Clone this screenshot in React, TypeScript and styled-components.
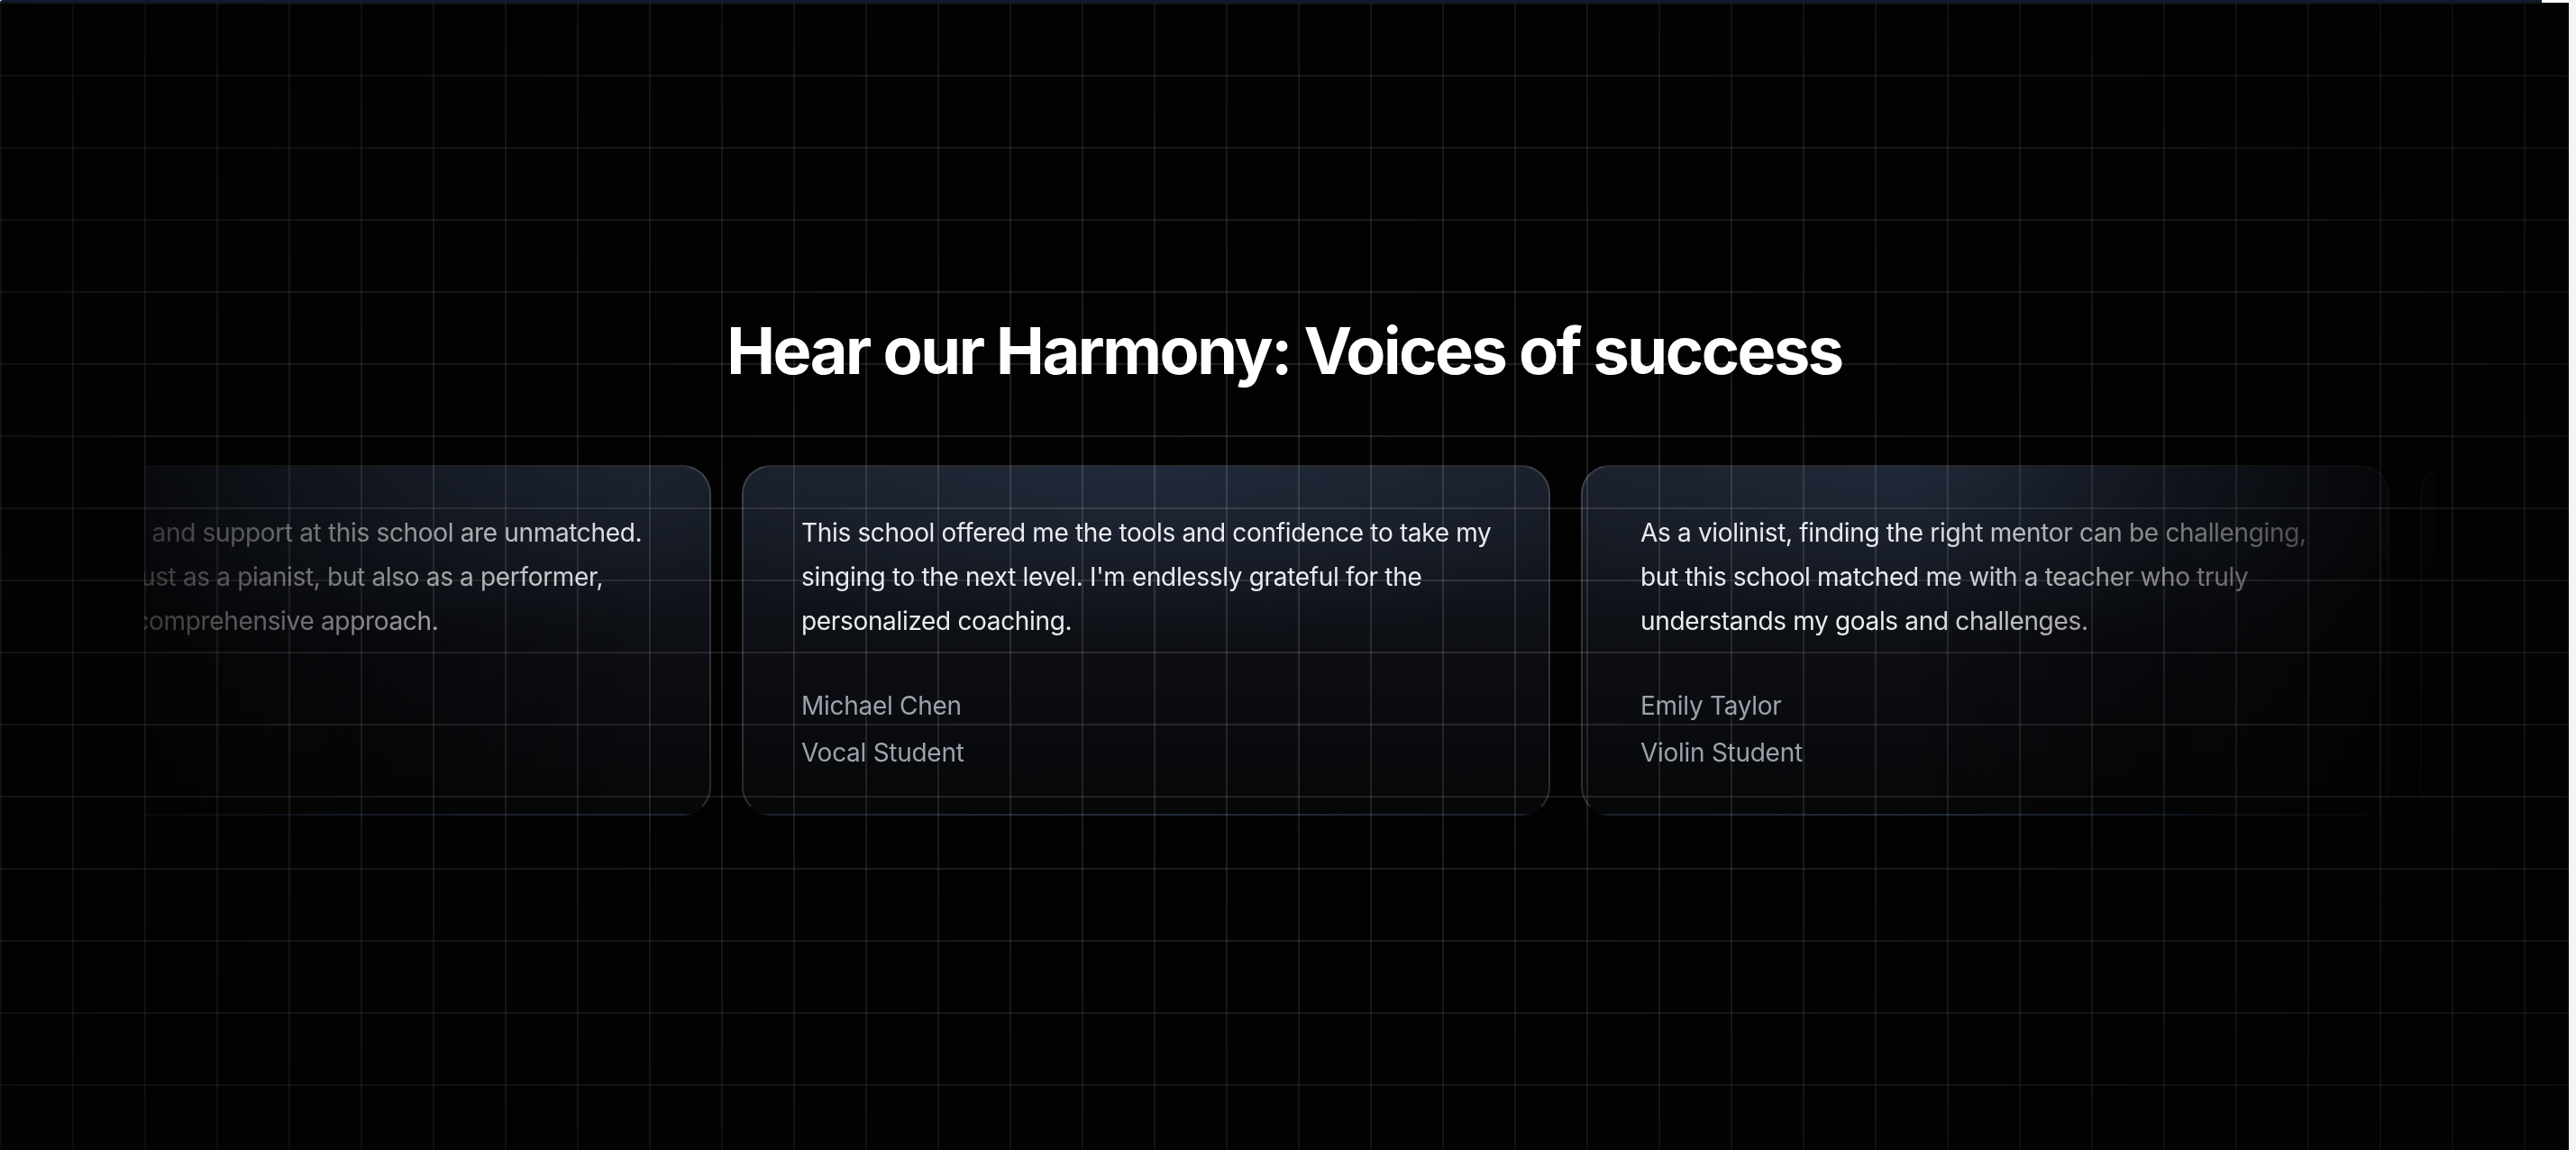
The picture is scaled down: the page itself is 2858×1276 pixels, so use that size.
import React from "react";
import styled, { createGlobalStyle } from "styled-components";

const GlobalStyle = createGlobalStyle`
  * { box-sizing: border-box; }
  html, body { margin: 0; padding: 0; background: #f6f6f6; }
  body {
    font-family: Inter, "Noto Sans", "Liberation Sans", sans-serif;
    -webkit-font-smoothing: antialiased;
  }
`;

const Page = styled.div`
  display: flex;
  height: 100vh;
  overflow: hidden;
`;

const Main = styled.main`
  flex: 1;
  display: flex;
  flex-direction: column;
  background: #020202;
  min-width: 0;
`;

const ScrollStrip = styled.div`
  width: 8px;
  background: #f4f4f4;
  border-left: 1px solid #ececec;
`;

const TopBar = styled.div`
  height: 3px;
  display: flex;
  background: #ffffff;
`;

const TopBarFill = styled.div`
  flex: 1;
  background: #141a2d;
  border-top-left-radius: 3px;
`;

const TopBarCap = styled.div`
  width: 30px;
  background: #ffffff;
`;

const Section = styled.section`
  position: relative;
  flex: 1;
  display: flex;
  flex-direction: column;
  align-items: center;
  padding-top: 350px;
  overflow: hidden;
`;

const GridOverlay = styled.div`
  position: absolute;
  inset: 0;
  pointer-events: none;
  z-index: 3;
  background-image:
    linear-gradient(to right, rgba(255, 255, 255, 0.12) 2px, transparent 2px),
    linear-gradient(to bottom, rgba(255, 255, 255, 0.12) 2px, transparent 2px);
  background-size: 80px 80px;
  background-position: 0 0;
  -webkit-mask-image: radial-gradient(ellipse 70% 75% at 50% 50%, #000 15%, rgba(0, 0, 0, 0.34) 100%);
  mask-image: radial-gradient(ellipse 70% 75% at 50% 50%, #000 15%, rgba(0, 0, 0, 0.34) 100%);
`;

const Title = styled.h2`
  position: relative;
  z-index: 1;
  margin: 0;
  font-size: 72px;
  line-height: 72px;
  font-weight: 700;
  letter-spacing: -0.034em;
  color: #ffffff;
`;

const CarouselMask = styled.div`
  position: relative;
  z-index: 1;
  align-self: stretch;
  margin-top: 91px;
  -webkit-mask-image: linear-gradient(to right, transparent 0%, #000 25%, #000 74%, transparent 97%);
  mask-image: linear-gradient(to right, transparent 0%, #000 25%, #000 74%, transparent 97%);
`;

const Viewport = styled.div`
  margin: 0 148px 0 160px;
  overflow: hidden;
`;

const Track = styled.div`
  display: flex;
  gap: 34px;
  margin-left: -268px;
`;

const Card = styled.article`
  flex: 0 0 897px;
  border: 2px solid rgba(255, 255, 255, 0.15);
  border-bottom-color: transparent;
  border-radius: 32px;
  padding: 49px 48px 42px 64px;
  background:
    radial-gradient(110% 70% at 50% 0%, rgba(46, 60, 84, 0.45) 0%, rgba(46, 60, 84, 0) 70%),
    linear-gradient(180deg, #171c26 0%, #0c0e13 55%, #060708 100%);
`;

const Quote = styled.p`
  margin: 0;
  font-size: 28px;
  line-height: 49px;
  letter-spacing: -0.012em;
  color: #e9ebef;
  white-space: nowrap;
`;

const QuoteLine = styled.span`
  display: block;
`;

const Meta = styled.div`
  margin-top: 43px;
  display: flex;
  flex-direction: column;
`;

const MetaLine = styled.span`
  font-size: 28px;
  line-height: 52px;
  letter-spacing: -0.01em;
  color: #9ba2ae;
  white-space: nowrap;
`;

type Testimonial = { lines: string[]; name: string; role: string };

const testimonials: Testimonial[] = [
  {
    lines: [
      "The mentorship and support at this school are unmatched.",
      "I've grown not just as a pianist, but also as a performer,",
      "thanks to their comprehensive approach.",
    ],
    name: "Sarah Kim",
    role: "Piano Student",
  },
  {
    lines: [
      "This school offered me the tools and confidence to take my",
      "singing to the next level. I'm endlessly grateful for the",
      "personalized coaching.",
    ],
    name: "Michael Chen",
    role: "Vocal Student",
  },
  {
    lines: [
      "As a violinist, finding the right mentor can be challenging,",
      "but this school matched me with a teacher who truly",
      "understands my goals and challenges.",
    ],
    name: "Emily Taylor",
    role: "Violin Student",
  },
  {
    lines: [
      "The music theory classes opened my eyes to how songs are",
      "built. I now compose my own pieces with real confidence",
      "and a clear sense of structure.",
    ],
    name: "David Rodriguez",
    role: "Guitar Student",
  },
];

export default function App() {
  return (
    <>
      <GlobalStyle />
      <Page>
        <Main>
          <TopBar>
            <TopBarFill />
            <TopBarCap />
          </TopBar>
          <Section>
            <Title>Hear our Harmony: Voices of success</Title>
            <CarouselMask>
              <Viewport>
                <Track>
                  {testimonials.map((t) => (
                    <Card key={t.name}>
                      <Quote>
                        {t.lines.map((l) => (
                          <QuoteLine key={l}>{l}</QuoteLine>
                        ))}
                      </Quote>
                      <Meta>
                        <MetaLine>{t.name}</MetaLine>
                        <MetaLine>{t.role}</MetaLine>
                      </Meta>
                    </Card>
                  ))}
                </Track>
              </Viewport>
            </CarouselMask>
            <GridOverlay />
          </Section>
        </Main>
        <ScrollStrip />
      </Page>
    </>
  );
}
